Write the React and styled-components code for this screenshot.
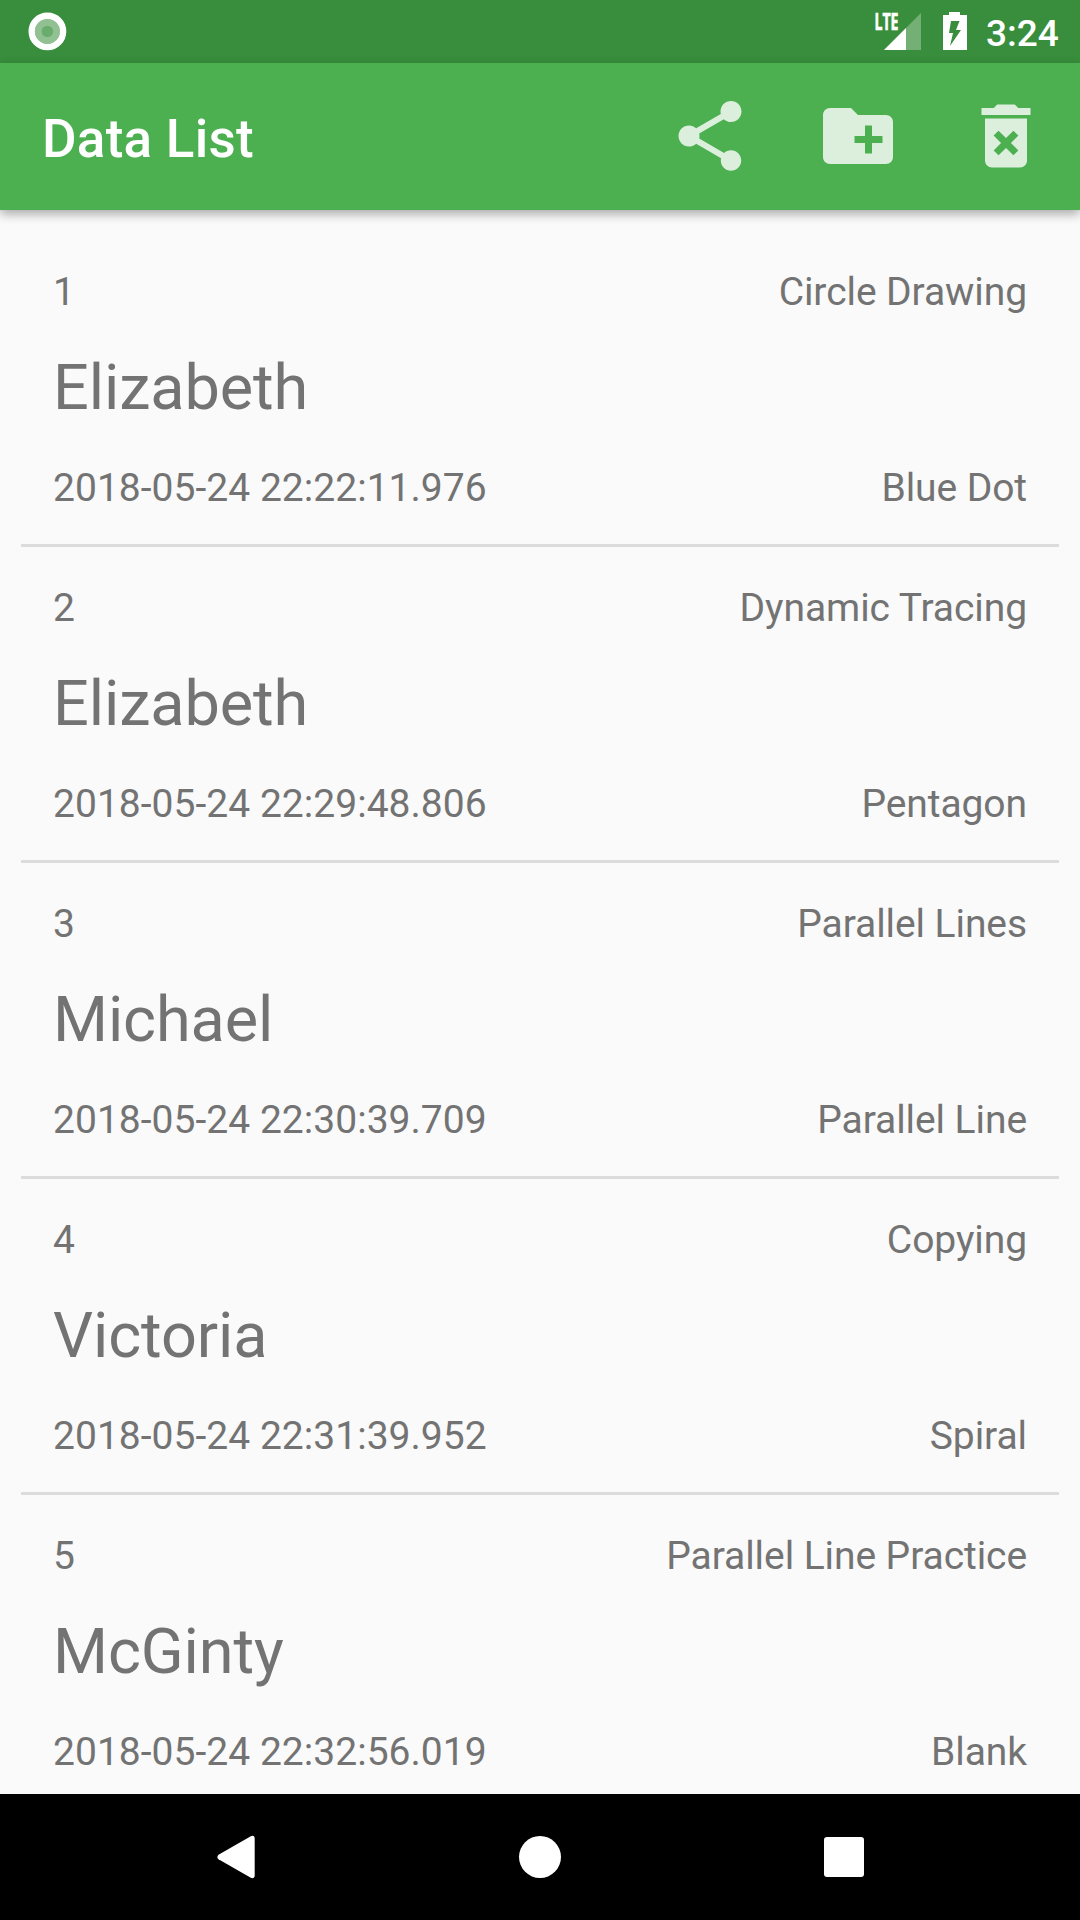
import React from 'react';
import styled, { createGlobalStyle } from 'styled-components';

const GlobalStyle = createGlobalStyle`
  *, *::before, *::after { box-sizing: border-box; }
  html, body { margin: 0; padding: 0; background: #fafafa; }
  body { font-family: Roboto, "Liberation Sans", sans-serif; overflow: hidden; }
`;

const Screen = styled.div`
  display: flex;
  flex-direction: column;
  width: 1080px;
  height: 1920px;
  overflow: hidden;
  background: #fafafa;
`;

const StatusBar = styled.header`
  flex: none;
  display: flex;
  align-items: center;
  justify-content: space-between;
  height: 63px;
  padding: 0 21px 0 28px;
  background: #388e3c;
  color: #fff;
`;

const StatusGroup = styled.div`
  display: flex;
  align-items: center;
  height: 63px;
`;

const StatusIcon = styled.svg`
  display: block;
  flex: none;
  margin-right: ${(p) => p.$gap || 0}px;
`;

const NetworkLabel = styled.text`
  font-family: "Open Sans", Roboto, sans-serif;
  font-size: 22.5px;
  font-weight: 700;
  stroke: #fff;
  stroke-width: 0.7px;
`;

const Clock = styled.time`
  width: 73px;
  font-size: 37px;
  font-weight: 500;
  line-height: 43px;
  padding-top: 3px;
  white-space: nowrap;
`;

const Toolbar = styled.div`
  flex: none;
  display: flex;
  align-items: center;
  justify-content: space-between;
  height: 147px;
  padding: 0 32px 0 42px;
  background: #4caf50;
  box-shadow: 0 4px 10px rgba(0, 0, 0, 0.33);
  z-index: 1;
`;

const Title = styled.h1`
  margin: 0;
  color: #fff;
  font-size: 53px;
  font-weight: 500;
  letter-spacing: 0.25px;
  line-height: 62px;
  padding-top: 5px;
`;

const Actions = styled.div`
  display: flex;
  gap: 64px;
`;

const ActionButton = styled.button`
  width: 84px;
  height: 84px;
  margin: 0 0 1px;
  padding: 0;
  border: 0;
  background: none;
  color: rgba(255, 255, 255, 0.8);

  svg {
    display: block;
    width: 84px;
    height: 84px;
    fill: currentColor;
  }
`;

const List = styled.ul`
  flex: 1;
  min-height: 0;
  margin: 0;
  padding: 21px 21px 0;
  overflow: hidden;
  list-style: none;
`;

const Item = styled.li`
  display: flex;
  flex-direction: column;
  height: 316px;
  padding: 38px 32px 0;
  border-bottom: 3px solid #dcdcdc;
  color: #737373;
`;

const Row = styled.div`
  display: flex;
  justify-content: space-between;
  font-size: 39px;
  line-height: 46px;
  white-space: nowrap;
`;

const Timestamp = styled.time`
  letter-spacing: 0.03px;
`;

const TaskLabel = styled.span`
  letter-spacing: -0.08px;
`;

const Name = styled.div`
  margin: 36px 0 40px;
  font-size: 63px;
  letter-spacing: -0.1px;
  line-height: 74px;
`;

const NavBar = styled.nav`
  flex: none;
  display: flex;
  align-items: center;
  justify-content: center;
  gap: 220px;
  height: 126px;
  background: #000;
`;

const NavIcon = styled.svg`
  display: block;
  width: 84px;
  height: 84px;
  fill: #fff;
`;

const records = [
  { name: 'Elizabeth', time: '2018-05-24 22:22:11.976', task: 'Circle Drawing', shape: 'Blue Dot' },
  { name: 'Elizabeth', time: '2018-05-24 22:29:48.806', task: 'Dynamic Tracing', shape: 'Pentagon' },
  { name: 'Michael', time: '2018-05-24 22:30:39.709', task: 'Parallel Lines', shape: 'Parallel Line' },
  { name: 'Victoria', time: '2018-05-24 22:31:39.952', task: 'Copying', shape: 'Spiral' },
  { name: 'McGinty', time: '2018-05-24 22:32:56.019', task: 'Parallel Line Practice', shape: 'Blank' },
];

const actions = [
  {
    label: 'Share',
    d: 'M18 16.08c-.76 0-1.44.3-1.96.77L8.91 12.7c.05-.23.09-.46.09-.7s-.04-.47-.09-.7l7.05-4.11c.54.5 1.25.81 2.04.81 1.66 0 3-1.34 3-3s-1.34-3-3-3-3 1.34-3 3c0 .24.04.47.09.7L8.04 9.81C7.5 9.31 6.79 9 6 9c-1.66 0-3 1.34-3 3s1.34 3 3 3c.79 0 1.5-.31 2.04-.81l7.12 4.16c-.05.21-.08.43-.08.65 0 1.61 1.31 2.92 2.92 2.92 1.61 0 2.92-1.31 2.92-2.92s-1.31-2.92-2.92-2.92z',
  },
  {
    label: 'New folder',
    d: 'M20 6h-8l-2-2H4c-1.11 0-1.99.89-1.99 2L2 18c0 1.11.89 2 2 2h16c1.11 0 2-.89 2-2V8c0-1.11-.89-2-2-2zm-1 8h-3v3h-2v-3h-3v-2h3V9h2v3h3v2z',
  },
  {
    label: 'Delete all',
    d: 'M6 19c0 1.1.9 2 2 2h8c1.1 0 2-.9 2-2V7H6v12zm2.46-7.12l1.41-1.41L12 12.59l2.12-2.12 1.41 1.41L13.41 14l2.12 2.12-1.41 1.41L12 15.41l-2.12 2.12-1.41-1.41L10.59 14l-2.13-2.12zM15.5 4l-1-1h-5l-1 1H5v2h14V4z',
  },
];

export default function App() {
  return (
    <Screen>
      <GlobalStyle />
      <StatusBar>
        <StatusIcon width="39" height="63" viewBox="0 0 39 63">
          <circle cx="19.4" cy="31.4" r="12.5" fill="#91c193" />
          <circle cx="19.4" cy="31.4" r="5.7" fill="#6aab6e" />
          <circle cx="19.4" cy="31.4" r="15.7" fill="none" stroke="#fff" strokeWidth="6.4" />
        </StatusIcon>
        <StatusGroup>
          <StatusIcon width="48" height="63" viewBox="0 0 48 63" $gap={20} fill="#fff">
            <path d="M47 13V50H10z" fillOpacity=".3" />
            <path d="M32 28V50H10z" />
            <NetworkLabel x="0.5" y="29.7" textLength="24" lengthAdjust="spacingAndGlyphs">LTE</NetworkLabel>
          </StatusIcon>
          <StatusIcon width="26" height="63" viewBox="0 0 26 63" $gap={18} fill="#fff">
            <path fillRule="evenodd" d="M1 15H7V12H18V15H25V50H1zM9 21L7 33H11L8 46L19 30H14L17.500 21z" />
          </StatusIcon>
          <Clock>3:24</Clock>
        </StatusGroup>
      </StatusBar>
      <Toolbar>
        <Title>Data List</Title>
        <Actions>
          {actions.map((a) => (
            <ActionButton key={a.label} aria-label={a.label}>
              <svg viewBox="0 0 24 24"><path d={a.d} /></svg>
            </ActionButton>
          ))}
        </Actions>
      </Toolbar>
      <List>
        {records.map((r, i) => (
          <Item key={r.time}>
            <Row><span>{i + 1}</span><TaskLabel>{r.task}</TaskLabel></Row>
            <Name>{r.name}</Name>
            <Row><Timestamp>{r.time}</Timestamp><TaskLabel>{r.shape}</TaskLabel></Row>
          </Item>
        ))}
      </List>
      <NavBar>
        <NavIcon viewBox="0 0 84 84">
          <path d="M24.500 39.700L56.800 21.200Q60.700 19.800 60.700 24V60Q60.700 64.200 56.800 62.800L24.500 44.300Q22.200 42 24.500 39.700z" />
        </NavIcon>
        <NavIcon viewBox="0 0 84 84"><circle cx="42" cy="42" r="21" /></NavIcon>
        <NavIcon viewBox="0 0 84 84"><rect x="22" y="22" width="40" height="40" rx="3" /></NavIcon>
      </NavBar>
    </Screen>
  );
}
